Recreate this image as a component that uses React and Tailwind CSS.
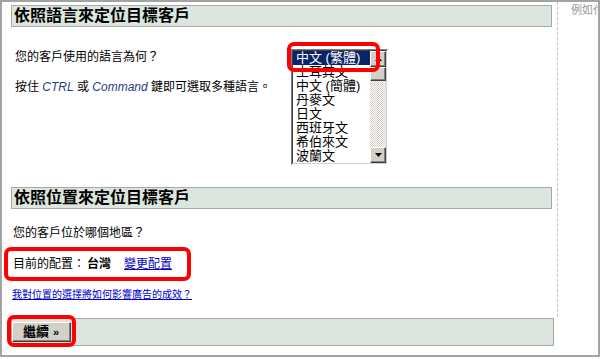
import React from 'react';

// --- DATA --------------------------------------------------------------------
const LANGUAGES = [
  '中文 (繁體)', '土耳其文', '中文 (簡體)', '丹麥文',
  '日文', '西班牙文', '希伯來文', '波蘭文',
];

// --- SUB-COMPONENTS ----------------------------------------------------------
function Heading({ text, className = '' }) {
  return (
    <div className={`h-[22px] w-[541px] border border-[#a8a8a8] bg-[#dce5de] pl-[2px] text-[16px] font-bold leading-[20px] ${className}`}>
      {text}
    </div>
  );
}

function Arrow({ up }) {
  return (
    <svg width="7" height="4" viewBox="0 0 7 4">
      <path d={up ? 'M3.5 0 L7 4 L0 4 Z' : 'M0 0 L7 0 L3.5 4 Z'} fill="#000" />
    </svg>
  );
}

function ScrollButton({ up }) {
  return (
    <div className="flex h-[16px] w-[16px] items-center justify-center border border-t-white border-l-white border-b-[#404040] border-r-[#404040] bg-[#d4d0c8] shadow-[inset_-1px_-1px_0_#808080]">
      <Arrow up={up} />
    </div>
  );
}

function LanguageList() {
  return (
    <div className="relative h-[116px] w-[97px] border border-t-[#808080] border-l-[#808080] border-b-white border-r-white">
      <div className="flex h-full border border-t-[#404040] border-l-[#404040] border-b-[#d4d0c8] border-r-[#d4d0c8] bg-white">
        <div className="flex-1">
          {LANGUAGES.map((l, i) => (
            <div
              key={l}
              className={`h-[14px] whitespace-nowrap pl-[3px] text-[13px] leading-[14px] ${i === 0 ? 'bg-[#0a246a] text-white' : 'text-black'}`}
            >
              {l}
            </div>
          ))}
        </div>
        <div className="flex w-[16px] flex-col">
          <ScrollButton up />
          <div className="h-[14px] border border-t-white border-l-white border-b-[#404040] border-r-[#404040] bg-[#d4d0c8] shadow-[inset_-1px_-1px_0_#808080]" />
          <div className="flex-1 bg-[repeating-conic-gradient(#d4d0c8_0%_25%,#ffffff_0%_50%)] bg-[length:2px_2px]" />
          <ScrollButton />
        </div>
      </div>
      {/* highlight ring */}
      <div className="absolute left-[-5px] top-[-8px] h-[30px] w-[93px] rounded-[7px] border-4 border-[#ff0000]" />
    </div>
  );
}

// --- MAIN COMPONENT ----------------------------------------------------------
export default function App() {
  return (
    <div className="h-[359px] w-[600px] overflow-hidden bg-white font-['Liberation_Sans','Noto_Sans_CJK_TC',sans-serif] text-black">
      <div className="flex h-[357px] flex-col border-2 border-[#a3a3a3]">

        {/* ── Top area ─────────────────────────────────────────────────── */}
        <div className="flex h-[315px]">
          <div className="w-[555px] pl-[9px] pt-[3px]">
            <Heading text="依照語言來定位目標客戶" />

            <div className="mt-[22px] flex">
              <div className="w-[280px] pl-[4px] text-[12px] leading-[14px]">
                <p className="mt-[1px]">您的客戶使用的語言為何？</p>
                <p className="mt-[16px] whitespace-nowrap">
                  按住 <i className="text-[#1f3c88]">CTRL</i> 或 <i className="text-[#1f3c88]">Command</i> 鍵即可選取多種語言。
                </p>
              </div>
              <LanguageList />
            </div>

            <Heading text="依照位置來定位目標客戶" className="mt-[22px]" />

            <p className="mt-[17px] pl-[2px] text-[12px] leading-[14px]">您的客戶位於哪個地區？</p>

            <div className="relative mt-[17px] flex pl-[2px] text-[12px] leading-[14px]">
              <span>目前的配置：</span>
              <span className="ml-[2px] font-bold">台灣</span>
              <a className="ml-[13px] text-[#0000cc] underline">變更配置</a>
              <div className="absolute left-[-7px] top-[-10px] h-[34px] w-[187px] rounded-[7px] border-4 border-[#ff0000]" />
            </div>

            <a className="mt-[18px] block pl-[1px] text-[10px] leading-[12px] text-[#0000cc] underline">
              我對位置的選擇將如何影響廣告的成效？
            </a>
          </div>

          <div className="flex-1 overflow-hidden whitespace-nowrap border-l border-dashed border-[#c4c4c4] pl-[13px] pt-[2px] text-[11px] leading-[13px] text-[#9a9a9a]">
            例如付款
          </div>
        </div>

        {/* ── Bottom bar ───────────────────────────────────────────────── */}
        <div className="relative ml-[9px] mt-[1px] h-[28px] w-[543px] border border-[#a8a8a8] bg-[#dce5de]">
          <button className="mt-[3px] flex h-[20px] w-[59px] items-center border border-t-white border-l-white border-b-[#404040] border-r-[#404040] bg-[#d4d0c8] pl-[10px] text-[13px] font-bold leading-[14px] shadow-[inset_-1px_-1px_0_#808080]">
            繼續 <span className="ml-[4px] text-[11px]">»</span>
          </button>
          <div className="absolute left-[-5px] top-[-4px] h-[32px] w-[69px] rounded-[7px] border-4 border-[#ff0000]" />
        </div>
      </div>
    </div>
  );
}
